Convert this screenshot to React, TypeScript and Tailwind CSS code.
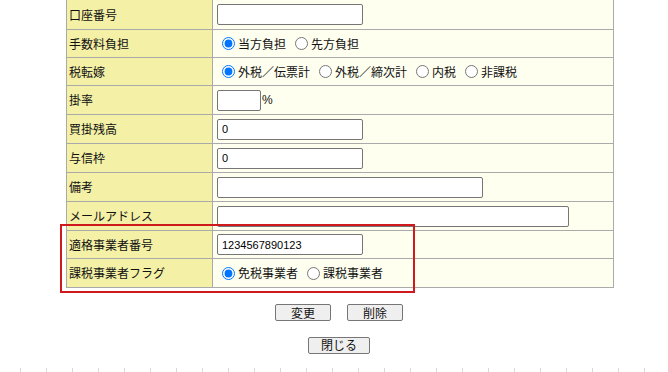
import React from 'react';

type RowProps = {
  label: string;
  h: string;
  children?: React.ReactNode;
};

function Row({ label, h, children }: RowProps) {
  return (
    <div className={`flex border-b border-[#aaaaaa] ${h}`}>
      <div className="w-[146px] shrink-0 border-r border-[#aaaaaa] bg-[#f4f0a6] pl-[2px] flex items-center">
        {label}
      </div>
      <div className="flex-1 bg-[#fffff0] pl-[4px] flex items-center">{children}</div>
    </div>
  );
}

function TextBox({ w, value = '' }: { w: string; value?: string }) {
  return (
    <input
      type="text"
      defaultValue={value}
      className={`h-[21px] ${w} border border-[#767676] rounded-[2px] bg-white px-[4px] text-[11px] text-black font-['Liberation_Sans',sans-serif] outline-none`}
    />
  );
}

function Radio({ name, label, checked = false }: { name: string; label: string; checked?: boolean }) {
  return (
    <label className="flex items-center">
      <input
        type="radio"
        name={name}
        defaultChecked={checked}
        className="m-0 ml-[5px] mr-[3px] w-[13px] h-[13px]"
      />
      <span>{label}</span>
    </label>
  );
}

export default function App() {
  const ticks = Array.from({ length: 25 });

  return (
    <div className="relative w-[668px] h-[372px] overflow-hidden bg-white text-[12px] text-[#111] font-['Noto_Sans_CJK_JP',sans-serif]">
      <div className="ml-[66px] w-[548px] border-x border-[#aaaaaa]">
        <Row label="口座番号" h="h-[30px]">
          <TextBox w="w-[146px]" />
        </Row>
        <Row label="手数料負担" h="h-[28px]">
          <div className="flex items-center gap-[4px]">
            <Radio name="tesuryo" label="当方負担" checked />
            <Radio name="tesuryo" label="先方負担" />
          </div>
        </Row>
        <Row label="税転嫁" h="h-[28px]">
          <div className="flex items-center gap-[4px]">
            <Radio name="zei" label="外税／伝票計" checked />
            <Radio name="zei" label="外税／締次計" />
            <Radio name="zei" label="内税" />
            <Radio name="zei" label="非課税" />
          </div>
        </Row>
        <Row label="掛率" h="h-[29px]">
          <TextBox w="w-[44px]" />
          <span className="ml-[1px] font-['Liberation_Sans',sans-serif]">%</span>
        </Row>
        <Row label="買掛残高" h="h-[29px]">
          <TextBox w="w-[146px]" value="0" />
        </Row>
        <Row label="与信枠" h="h-[29px]">
          <TextBox w="w-[146px]" value="0" />
        </Row>
        <Row label="備考" h="h-[29px]">
          <TextBox w="w-[266px]" />
        </Row>
        <Row label="メールアドレス" h="h-[29px]">
          <TextBox w="w-[352px]" />
        </Row>
        <Row label="適格事業者番号" h="h-[28px]">
          <TextBox w="w-[146px]" value="1234567890123" />
        </Row>
        <Row label="課税事業者フラグ" h="h-[29px]">
          <div className="flex items-center gap-[4px]">
            <Radio name="kazei" label="免税事業者" checked />
            <Radio name="kazei" label="課税事業者" />
          </div>
        </Row>
      </div>

      <div className="mt-[16px] ml-[275px] flex gap-[16px]">
        <button className="h-[17px] w-[56px] border border-[#767676] rounded-[2px] bg-[#efefef] text-[12px] leading-none">
          変更
        </button>
        <button className="h-[17px] w-[56px] border border-[#767676] rounded-[2px] bg-[#efefef] text-[12px] leading-none">
          削除
        </button>
      </div>

      <div className="mt-[15px] ml-[308px]">
        <button className="h-[17px] w-[62px] border border-[#767676] rounded-[2px] bg-[#efefef] text-[12px] leading-none">
          閉じる
        </button>
      </div>

      <div className="mt-[14px] pl-[20px] flex gap-[25px]">
        {ticks.map((_, i) => (
          <div key={i} className="w-px h-[5px] bg-[#d8d8d8]" />
        ))}
      </div>

      {/* 赤枠の注記 */}
      <div className="absolute left-[60px] top-[224px] w-[355px] h-[69px] border-2 border-[#d0191c] pointer-events-none" />
    </div>
  );
}
